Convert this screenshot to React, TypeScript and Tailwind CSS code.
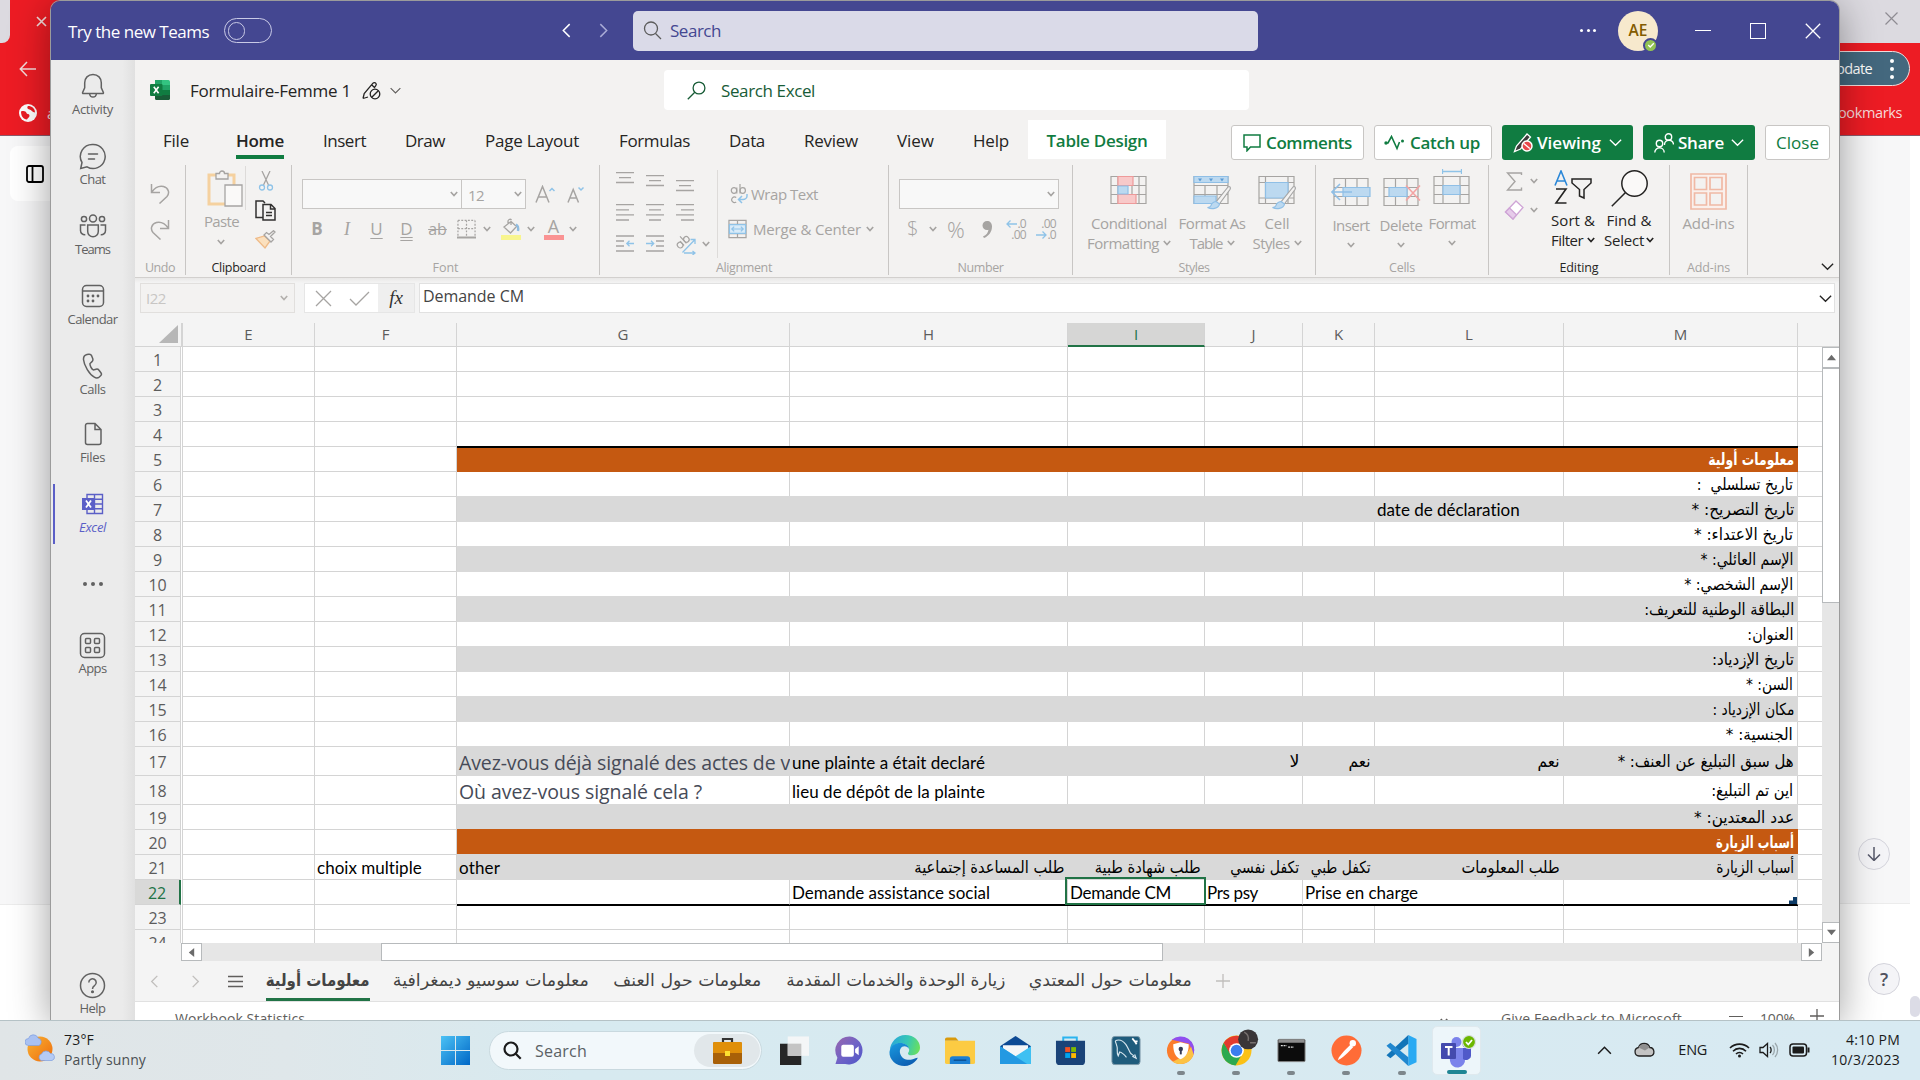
import React, { useLayoutEffect, useRef, useState, type ReactNode } from "react";

/* Text that fills the width given by its class: Latin by tracking, Arabic by horizontal scale. */
function Fit({ c = "", ar = false, children }: { c?: string; ar?: boolean; children: string }) {
  const outer = useRef<HTMLSpanElement>(null);
  const inner = useRef<HTMLSpanElement>(null);
  const [v, setV] = useState<number | null>(null);
  useLayoutEffect(() => {
    if (!outer.current || !inner.current || v !== null) return;
    const target = outer.current.clientWidth;
    const natural = inner.current.getBoundingClientRect().width;
    setV(ar ? target / natural : (target - natural) / children.length);
  }, [v, ar, children]);
  const style = v === null ? undefined : ar ? { transform: `scaleX(${v})` } : { letterSpacing: v };
  return (
    <span ref={outer} className={"shrink-0 whitespace-pre leading-none " + (ar ? "flex justify-end " : "block ") + c}>
      <span ref={inner} dir={ar ? "rtl" : "ltr"} className="inline-block origin-right shrink-0 leading-[1.4]" style={style}>
        {children}
      </span>
    </span>
  );
}

function Svg({ c, vb, children, sw = 1.3 }: { c: string; vb: string; children: ReactNode; sw?: number }) {
  return (
    <svg className={"block shrink-0 " + c} viewBox={vb} fill="none" stroke="currentColor" strokeWidth={sw}>
      {children}
    </svg>
  );
}

function Ch({ c = "" }: { c?: string }) {
  return (
    <Svg c={"w-[8px] h-[6px] " + c} vb="0 0 8 6" sw={1.6}>
      <path d="M.8 1 4 4.6 7.2 1" />
    </Svg>
  );
}

function Chevron({ c = "", d = "down" }: { c?: string; d?: "down" | "left" | "right" | "up" }) {
  const p = { down: "M2 5l6 6 6-6", up: "M2 11l6-6 6 6", left: "M11 2L5 8l6 6", right: "M5 2l6 6-6 6" }[d];
  return (
    <Svg c={c} vb="0 0 16 16" sw={1.4}>
      <path d={p} />
    </Svg>
  );
}

/* ---------- Teams rail ---------- */
function RailItem({ label, w, icon, c = "" }: { label: string; w: string; icon: ReactNode; c?: string }) {
  return (
    <div className={"flex flex-col items-center shrink-0 h-[48px] pr-[1px] " + c}>
      <div className="h-[30px] flex items-center">{icon}</div>
      <div className="h-[18px] flex items-center -mt-[1px]">
        <Fit c={"text-[13px] " + w}>{label}</Fit>
      </div>
    </div>
  );
}

function Rail() {
  return (
    <div className="w-[84px] shrink-0 pt-[11px] flex flex-col bg-[linear-gradient(90deg,#ebebeb_0,#ebebeb_85%,#e0e0e0_100%)] text-[#616161]">
      <RailItem label="Activity" w="w-[41px]" icon={
        <Svg c="w-[26px] h-[26px]" vb="0 0 26 26" sw={1.5}><path d="M13 1.5c-5 0-8.3 3.600-8.300 8.300v5L2.600 19.500c-.2.600.1 1 .7 1h19.400c.6 0 .9-.4.7-1l-2.100-4.700v-5C21.300 5.100 18 1.500 13 1.500zM9.500 20.500c.3 2.300 1.700 3.600 3.500 3.600s3.200-1.300 3.500-3.600" /></Svg>} />
      <RailItem c="mt-[22px]" label="Chat" w="w-[26px]" icon={
        <Svg c="w-[27px] h-[27px]" vb="0 0 27 27" sw={1.5}><path d="M14 1.500a12 12 0 1 1-6 22.300L1.700 25.500 3 19.500A12 12 0 0 1 14 1.500zM9.500 11h9M9.500 16h6" strokeLinecap="round" /></Svg>} />
      <RailItem c="mt-[22px]" label="Teams" w="w-[35px]" icon={
        <Svg c="w-[28px] h-[24px]" vb="0 0 28 24" sw={1.5}><circle cx="14" cy="4.500" r="3.500" /><circle cx="5" cy="5" r="2.600" /><circle cx="23" cy="5" r="2.600" /><path d="M8.700 11h10.600v6.500a5.300 5.300 0 0 1-10.600 0zM6.500 11H1.500v5.500c0 2.500 2 4.500 4.800 4.300M21.500 11h5v5.500c0 2.500-2 4.500-4.800 4.300" /></Svg>} />
      <RailItem c="mt-[22px]" label="Calendar" w="w-[50px]" icon={
        <Svg c="w-[24px] h-[24px]" vb="0 0 24 24" sw={1.5}><rect x="1.500" y="1.500" width="21" height="21" rx="4" /><path d="M1.500 7h21" /><g fill="currentColor" stroke="none"><circle cx="7" cy="12" r="1.400" /><circle cx="12" cy="12" r="1.400" /><circle cx="17" cy="12" r="1.400" /><circle cx="7" cy="17" r="1.400" /><circle cx="12" cy="17" r="1.400" /></g></Svg>} />
      <RailItem c="mt-[22px]" label="Calls" w="w-[26px]" icon={
        <Svg c="w-[22px] h-[26px]" vb="0 0 22 26" sw={1.5}><path d="M5 1.500l1.700-.3c1.300-.2 2.500.5 3 1.700l1 2.700c.4 1.100.1 2.300-.7 3L8 10.500c-.3 2 1.500 5.300 3.300 6.500l2.800-.8c1.100-.3 2.200.1 2.900 1l1.900 2.500c.7 1 .6 2.300-.3 3.100l-1.300 1.200c-1.400 1.200-3.400 1.200-5 .2C7.500 21.500 2 12.500 1.500 6.500 1.400 4 2.700 2 5 1.500z" /></Svg>} />
      <RailItem c="mt-[20px]" label="Files" w="w-[25px]" icon={
        <Svg c="w-[20px] h-[24px]" vb="0 0 20 24" sw={1.500}><path d="M4.500 1.500h7.500l6 6v13a2 2 0 0 1-2 2H4.500a2 2 0 0 1-2-2v-17a2 2 0 0 1 2-2zM12 1.500v6h6" /></Svg>} />
      <div className="relative mt-[22px]">
        <RailItem c="text-[#5b5fc7] italic" label="Excel" w="w-[27px]" icon={
          <Svg c="w-[22px] h-[22px]" vb="0 0 22 22" sw={1.400}><path d="M5 1.500h15.500v19H5zM12.500 1.500v19M5 6.300h15.500M5 11h15.500M5 15.700h15.500" /><rect x="0" y="5" width="13" height="12" fill="currentColor" stroke="none" /><path d="M4 7.500l5 7M9 7.500l-5 7" stroke="#fff" strokeWidth="1.800" /></Svg>} />
        <div className="absolute left-[2px] -top-[5px] w-[2px] h-[60px] bg-[#5b5fc7]" />
      </div>
      <div className="mt-[37px] h-[20px] flex items-center justify-center gap-[4px]">
        <i className="size-[4px] rounded-full bg-[#616161]" /><i className="size-[4px] rounded-full bg-[#616161]" /><i className="size-[4px] rounded-full bg-[#616161]" />
      </div>
      <RailItem c="mt-[36px]" label="Apps" w="w-[28px]" icon={
        <Svg c="w-[27px] h-[27px]" vb="0 0 27 27" sw={1.500}><rect x="1.500" y="1.500" width="24" height="24" rx="4" /><rect x="6.500" y="6.500" width="5" height="5" rx="1" /><rect x="15.500" y="6.500" width="5" height="5" rx="1" /><rect x="6.500" y="15.500" width="5" height="5" rx="1" /><rect x="15.500" y="15.500" width="5" height="5" rx="1" /></Svg>} />
      <RailItem c="mt-[292px]" label="Help" w="w-[26px]" icon={
        <Svg c="w-[27px] h-[27px]" vb="0 0 27 27" sw={1.500}><circle cx="13.500" cy="13.500" r="12" /><path d="M9.800 10.500a3.700 3.700 0 1 1 5.700 3.100c-1.300.9-2 1.700-2 3.400" /><circle cx="13.500" cy="19.800" r=".8" fill="currentColor" /></Svg>} />
    </div>
  );
}

/* ---------- Title bar ---------- */
function TitleBar() {
  return (
    <div className="h-[59px] shrink-0 bg-[#444791] flex items-center text-white">
      <Fit c="ml-[17px] mt-[2px] w-[141px] text-[17px]">Try the new Teams</Fit>
      <div className="ml-[15px] w-[48px] h-[25px] rounded-full border border-[#c9cae6] flex items-center pl-[3px]">
        <div className="w-[17px] h-[18px] rounded-full border border-[#c9cae6]" />
      </div>
      <Chevron d="left" c="ml-[286px] size-[17px]" />
      <Chevron d="right" c="ml-[20px] size-[17px] text-[#a9abd6]" />
      <div className="ml-[21px] w-[625px] h-[40px] rounded-[5px] bg-[#dadae8] flex items-center">
        <Svg c="ml-[10px] w-[19px] h-[19px] text-[#5c5c5c]" vb="0 0 19 19"><circle cx="8" cy="7.500" r="6.500" /><path d="M12.500 12.500l5.500 5.500" /></Svg>
        <Fit c="ml-[8px] w-[51px] text-[17px] text-[#444791]">Search</Fit>
      </div>
      <div className="ml-[322px] w-[16px] flex justify-between">
        <i className="size-[3px] rounded-full bg-white" /><i className="size-[3px] rounded-full bg-white" /><i className="size-[3px] rounded-full bg-white" />
      </div>
      <div className="relative ml-[22px] size-[40px] rounded-full bg-[#f7e9cd] flex items-center justify-center">
        <Fit c="w-[19px] text-[15.500px] font-semibold text-[#835b00]">AE</Fit>
        <div className="absolute left-[25px] top-[27px] size-[15px] rounded-full bg-[#92c353] border-2 border-[#444791] flex items-center justify-center">
          <Svg c="size-[8px]" vb="0 0 8 8"><path d="M1.200 4l2 2 3.600-3.800" /></Svg>
        </div>
      </div>
      <div className="ml-[37px] w-[16px] h-px bg-white" />
      <div className="ml-[39px] w-[16px] h-[16px] border border-white" />
      <Svg c="ml-[39px] w-[16px] h-[16px]" vb="0 0 16 16"><path d="M.8.8l14.400 14.400M15.200.8L.8 15.200" /></Svg>
    </div>
  );
}

/* ---------- Excel header ---------- */
function NameRow() {
  return (
    <div className="h-[60px] flex items-center text-[#252423]">
      <Svg c="ml-[15px] w-[20px] h-[20px]" vb="0 0 20 20">
        <g stroke="none"><path d="M5 0h7v10H5z" fill="#21a366" /><path d="M12 0h6.500A1.500 1.500 0 0 1 20 1.500V5h-8z" fill="#33c481" /><path d="M12 5h8v5h-8z" fill="#21a366" /><path d="M5 10h7v10H6.500A1.500 1.500 0 0 1 5 18.500z" fill="#185c37" /><path d="M12 10h8v5h-8z" fill="#107c41" /><path d="M10 15h10v3.500a1.500 1.500 0 0 1-1.500 1.500H10z" fill="#185c37" /><rect x="0" y="4" width="12.500" height="12" rx="1" fill="#107c41" /></g>
        <path d="M3.800 6.800l4.800 6.400M8.600 6.800l-4.800 6.400" stroke="#fff" strokeWidth="1.600" />
      </Svg>
      <Fit c="ml-[20px] mt-[2px] w-[161px] text-[17px]">Formulaire-Femme 1</Fit>
      <Svg c="ml-[11px] w-[19px] h-[19px]" vb="0 0 19 19"><path d="M1 17.500l1.200-5L11 2.200c.7-.8 1.900-.9 2.600-.2.800.7.900 1.700.2 2.600L12 7M1 17.500l5-1.500M9.800 4l2.500 2.200" /><circle cx="13" cy="13" r="4.800" /><path d="M9.800 16.300l6.500-6.500" /></Svg>
      <Chevron c="ml-[8px] size-[13px] text-[#605e5c]" />
      <div className="ml-[262px] w-[585px] h-[40px] rounded-[4px] bg-white flex items-center text-[#185c37]">
        <Svg c="ml-[23px] w-[19px] h-[19px]" vb="0 0 19 19"><circle cx="12" cy="7" r="5.900" /><path d="M7.800 11.200L.8 18.200" /></Svg>
        <Fit c="ml-[15px] mt-[2px] w-[94px] text-[17px]">Search Excel</Fit>
      </div>
    </div>
  );
}

const TABS: [string, string][] = [
  ["File", "ml-[28px] w-[26px]"],
  ["Insert", "ml-[39px] w-[43px]"],
  ["Draw", "ml-[39px] w-[40px]"],
  ["Page Layout", "ml-[40px] w-[94px]"],
  ["Formulas", "ml-[40px] w-[71px]"],
  ["Data", "ml-[39px] w-[36px]"],
  ["Review", "ml-[39px] w-[54px]"],
  ["View", "ml-[39px] w-[37px]"],
  ["Help", "ml-[39px] w-[36px]"],
];

function TabRow() {
  return (
    <div className="h-[40px] flex text-[17px] text-[#252423]">
      <div className="h-[39px] pt-[3px] flex items-center">
        <Fit c={TABS[0][1]}>{TABS[0][0]}</Fit>
        <div className="ml-[47px] w-[48px] h-[36px] flex flex-col justify-end border-b-4 border-[#107c41]">
          <Fit c="w-[48px] mb-[2px] font-semibold">Home</Fit>
        </div>
        {TABS.slice(1).map(([t, c]) => <Fit key={t} c={c}>{t}</Fit>)}
      </div>
      <div className="ml-[19px] w-[138px] h-[39px] pt-[3px] bg-white flex items-center justify-center">
        <Fit c="w-[101px] font-semibold text-[#107c41]">Table Design</Fit>
      </div>
      <div className="ml-[65px] mt-[5px] h-[35px] flex gap-[10px] text-[#107c41] font-semibold text-[17px]">
        <div className="w-[133px] bg-white border border-[#c8c6c4] rounded-[3px] flex items-center">
          <Svg c="ml-[11px] w-[18px] h-[18px]" vb="0 0 18 18" sw={1.500}><path d="M1 1h16v12H7.500L4 16.800V13H1z" /></Svg>
          <Fit c="ml-[5px] mt-[1px] w-[86px]">Comments</Fit>
        </div>
        <div className="w-[118px] bg-white border border-[#c8c6c4] rounded-[3px] flex items-center">
          <Svg c="ml-[9px] w-[21px] h-[16px]" vb="0 0 21 16" sw={1.600}><path d="M1 8h3L7.500 1.500l5.500 12L15.500 7" /><circle cx="18.500" cy="6" r="1.500" fill="currentColor" stroke="none" /><circle cx="2" cy="8" r="1.700" fill="currentColor" stroke="none" /></Svg>
          <Fit c="ml-[5px] mt-[1px] w-[70px]">Catch up</Fit>
        </div>
        <div className="w-[131px] bg-[#107c41] text-white rounded-[3px] flex items-center">
          <Svg c="ml-[11px] w-[21px] h-[21px]" vb="0 0 21 21" sw={1.300}><path d="M1.500 19.500l2-5.500L14 2l3.500 3L7.500 17z" fill="#3b3a39" /><circle cx="14" cy="14" r="5" fill="#e8484b" stroke="#fff" strokeWidth="1.500" /><path d="M10.800 11.500l6 5" /></Svg>
          <Fit c="ml-[3px] mt-[1px] w-[64px]">Viewing</Fit>
          <Chevron c="ml-[7px] size-[15px]" />
        </div>
        <div className="w-[112px] bg-[#107c41] text-white rounded-[3px] flex items-center">
          <Svg c="ml-[11px] w-[20px] h-[20px]" vb="0 0 20 20" sw={1.400}><circle cx="14.500" cy="4" r="3.200" /><circle cx="5.500" cy="10.500" r="3.200" /><path d="M10.500 12a4.500 4.500 0 0 1 9-.500M.8 19.500a4.700 4.700 0 0 1 9.400 0" /></Svg>
          <Fit c="ml-[4px] mt-[1px] w-[46px]">Share</Fit>
          <Chevron c="ml-[6px] size-[15px]" />
        </div>
        <div className="w-[65px] bg-white border border-[#c8c6c4] rounded-[3px] flex items-center justify-center font-normal">
          <Fit c="w-[43px] mt-[1px]">Close</Fit>
        </div>
      </div>
    </div>
  );
}

/* ---------- Ribbon ---------- */
function Group({ w, label, lw, on = false, children }: { w: string; label: string; lw: string; on?: boolean; children: ReactNode }) {
  return (
    <div className={"h-[110px] shrink-0 border-r border-[#c8c6c4] flex flex-col " + w}>
      <div className="h-[97px] flex items-start">{children}</div>
      <div className={"h-[15px] flex items-center justify-center text-[12.500px] " + (on ? "text-[#252423]" : "")}>
        <Fit c={lw}>{label}</Fit>
      </div>
    </div>
  );
}

function Lines({ d, c = "" }: { d: "l" | "c" | "r" | "v"; c?: string }) {
  const p = {
    v: "M0 .7h18M3 5.600h12M0 10.500h18",
    l: "M0 .7h18M0 5.800h13M0 10.900h18M0 16h13",
    c: "M0 .7h18M3 5.800h12M0 10.900h18M3 16h12",
    r: "M0 .7h18M5 5.800h13M0 10.900h18M5 16h13",
  }[d];
  return <Svg c={"w-[18px] h-[18px] " + c} vb="0 0 18 18"><path d={p} /></Svg>;
}

function IndentIcon({ out }: { out?: boolean }) {
  return (
    <Svg c="w-[18px] h-[18px]" vb="0 0 18 18">
      <path d={out ? "M0 1h18M0 6h8M0 11h8M0 16h18" : "M0 1h18M10 6h8M10 11h8M0 16h18"} />
      <path stroke="#8fc3e8" d={out ? "M18 8.500h-7M13.500 5.800L10.800 8.500l2.700 2.700" : "M0 8.500h7.500M5 5.800l2.700 2.700L5 11.200"} />
    </Svg>
  );
}

function TableIcon({ kind }: { kind: "cond" | "table" | "cell" | "insert" | "delete" | "format" }) {
  const brush = <><path d="M36 13L24 28l3 2.500L38 15.500c1.200-2-.7-4-2-2.500z" fill="#f3f2f1" stroke="#a6a6a6" /><path d="M24 27.500c-3 .5-4.500 2-5 4-.5 1.300-1.700 2-3.500 2 4 2 11 1.500 12-3.500z" fill="#bcd9f0" stroke="#8fbfe6" /></>;
  return (
    <Svg c="w-[40px] h-[36px]" vb="0 0 40 36" sw={1.200}>
      {kind === "cond" && <><path d="M2 2.500h35v27H2zM2 11.500h35M2 20.500h35M9 2.500v27M30 2.500v27M23 2.500v27" /><path d="M9 2.500h15v9H9zM9 20.500h18v9H9z" fill="#f8c9c9" stroke="#ee9a9a" /><path d="M9 12h10v8H9z" fill="#bcd9f0" stroke="#8fbfe6" /></>}
      {kind === "table" && <><path d="M2 2.500h34v27H2zM2 11.500h34M2 20.500h34M13 11.500v18M25 11.500v18" /><path d="M2 2.500h34v6H2zM2 22h22v7.500H2z" fill="#bcd9f0" stroke="#8fbfe6" /><path d="M6 4.500h4l-2 3zM17 4.500h4l-2 3zM28 4.500h4l-2 3z" fill="#5a9bd5" stroke="none" />{brush}</>}
      {kind === "cell" && <><path d="M2 2.500h35v27H2zM2 8.500h35M2 24h35M8.500 2.500v27M31 2.500v27" /><path d="M8.500 8.500H31V24H8.500z" fill="#bcd9f0" stroke="#8fbfe6" />{brush}</>}
      {kind === "insert" && <><path d="M3 2.500h34v27H3zM3 11.500h34M3 20.500h34M14.500 2.500v27M26 2.500v27" /><path d="M12 11.500h27v9H12z" fill="#bcd9f0" stroke="#8fbfe6" /><path d="M21 16H1M9 8l-8 8 8 8" stroke="#8fbfe6" strokeWidth="1.600" /></>}
      {kind === "delete" && <><path d="M3 2.500h34v27H3zM3 11.500h34M3 20.500h34M14.500 2.500v27M26 2.500v27" /><path d="M8 11.500h18v9H8z" fill="#bcd9f0" stroke="#8fbfe6" /><path d="M25 9.500l14 15M39 9.500l-14 15" stroke="#f3a3a3" strokeWidth="1.600" /></>}
      {kind === "format" && <><path d="M2 2.500h35v27H2zM2 11.500h35M2 20.500h35M11 2.500v27M28 2.500v27" /><path d="M11 11.500h17v9H11z" fill="#bcd9f0" stroke="#8fbfe6" /></>}
    </Svg>
  );
}

function Big({ w, icon, l1, l2, c = "" }: { w: string; icon: ReactNode; l1: [string, string]; l2?: [string, string]; c?: string }) {
  return (
    <div className={"pt-[9px] flex flex-col items-center shrink-0 text-[15px] " + w + " " + c}>
      <div className="h-[39px]">{icon}</div>
      <div className="h-[20px] flex items-center"><Fit c={l1[1]}>{l1[0]}</Fit></div>
      <div className="h-[20px] flex items-center gap-[4px]">{l2 && l2[0] && <Fit c={l2[1]}>{l2[0]}</Fit>}{l2 && <Ch />}</div>
    </div>
  );
}

function Ribbon() {
  return (
    <div className="h-[118px] pt-[5px] flex text-[#a6a4a2] border-b border-[#d2d0ce]">
      <Group w="w-[51px]" label="Undo" lw="w-[30px]">
        <div className="pl-[15px] pt-[18px] flex flex-col gap-[15px]">
          <Svg c="w-[20px] h-[21px]" vb="0 0 20 21" sw={1.5}><path d="M1.500 1v8.500H10M1.800 9C5 4.500 9 2.500 13.500 3.500c5 1.300 6.500 6.500 3.500 10L9.500 20.500" /></Svg>
          <Svg c="w-[20px] h-[21px]" vb="0 0 20 21" sw={1.5}><path d="M18.500 1v8.500H10M18.200 9C15 4.500 11 2.500 6.500 3.500 1.500 4.800 0 10 3 13.500L10.500 20.500" /></Svg>
        </div>
      </Group>
      <Group w="w-[106px]" label="Clipboard" lw="w-[54px]" on>
        <div className="ml-[17px] w-[42px] pt-[4px] flex flex-col items-start">
          <Svg c="ml-[4px] w-[36px] h-[38px]" vb="0 0 36 38"><path d="M2 6h25v29H2z" fill="none" stroke="#f5d19f" strokeWidth="3" /><path d="M9 4.500h3.500a2.500 2.500 0 0 1 5 0H21V10H9z" fill="#f3f2f1" /><path d="M18 16h17v21H18z" fill="#faf9f8" /></Svg>
          <div className="ml-[1px] h-[20px] mt-[4px] flex items-center"><Fit c="w-[35px] text-[15px]">Paste</Fit></div>
          <Ch c="ml-[14px] mt-[8px]" />
        </div>
        <div className="w-px h-[44px] mt-[1px] bg-[#dddbd9]" />
        <div className="ml-[9px] pt-[6px] flex flex-col items-center gap-[9px]">
          <Svg c="w-[16px] h-[20px]" vb="0 0 16 20"><path d="M4 0l6.500 14M12 0L5.500 14" /><circle cx="4" cy="16.500" r="2.500" stroke="#8fc3e8" /><circle cx="12" cy="16.500" r="2.500" stroke="#8fc3e8" /></Svg>
          <Svg c="w-[21px] h-[21px] text-[#323130]" vb="0 0 21 21" sw={1.500}><path d="M8 17.500H1V1h7l2 2M8 4.500h8l4 4V20H8zM15.500 4.500v4.500H20M11 12.500h6M11 15.500h6" /></Svg>
          <Svg c="w-[21px] h-[20px]" vb="0 0 21 20"><path d="M1 8.500l9 9.500 5-7-5.500-5z" fill="#fbe0bd" stroke="#efbb88" /><path d="M9 5l7 7 2.500-2.500-3-3L20 2 18.500.7 14 4.500l-2.500-2z" fill="#f3f2f1" /></Svg>
        </div>
      </Group>
      <Group w="w-[308px]" label="Font" lw="w-[26px]">
        <div className="ml-[10px] pt-[14px] flex flex-col">
          <div className="flex items-center">
            <div className="w-[160px] h-[30px] border border-[#c8c6c4] bg-[#f8f8f8] flex items-center justify-end pr-[3px]"><Ch /></div>
            <div className="w-[64px] h-[30px] border border-l-0 border-[#c8c6c4] bg-[#f8f8f8] flex items-center justify-between pl-[6px] pr-[3px]"><Fit c="w-[16px] mt-[2px] text-[15px]">12</Fit><Ch /></div>
            <Svg c="ml-[9px] w-[20px] h-[18px]" vb="0 0 20 18" sw={1.500}><path d="M1 17.500L7.500 1.500 14 17.500M3.200 12h8.600" /><path d="M14.500 6L17 3.500 19.500 6" stroke="#8fc3e8" /></Svg>
            <Svg c="ml-[12px] w-[18px] h-[18px]" vb="0 0 18 18" sw={1.500}><path d="M1 17.500L6.200 4.500l5.300 13M2.900 13h6.700" /><path d="M11.500 2.500L14 5 16.500 2.500" stroke="#8fc3e8" /></Svg>
          </div>
          <div className="h-[30px] mt-[5px] flex items-center text-[17px]">
            <span className="w-[30px] text-center font-bold">B</span>
            <span className="w-[30px] text-center italic font-['Liberation_Serif'] text-[18px]">I</span>
            <span className="w-[29px] text-center underline underline-offset-[3px]">U</span>
            <span className="w-[31px] text-center underline decoration-double underline-offset-[2px]">D</span>
            <span className="w-[31px] text-center line-through text-[16px]">ab</span>
            <Svg c="ml-[4px] w-[19px] h-[20px]" vb="0 0 20 20"><path d="M1 1h18M1 1v17M19 1v17M10 1v17M1 9.500h18" strokeDasharray="2 1.500" /><path d="M0 19h20" strokeWidth="2" /></Svg>
            <Ch c="ml-[7px]" />
            <Svg c="ml-[10px] w-[20px] h-[22px]" vb="0 0 20 22"><path d="M10 3.500l5.500 5L9.500 15 3 9zM10 3.500V7M7 6V3.500a2 2 0 0 1 3.500-1.500" /><path d="M15 6.500c2 1 2.500 3.500 2 6.500" stroke="#8fbce0" strokeWidth="2.400" /><path d="M0 17h20v5H0z" fill="#f8f58e" stroke="none" /></Svg>
            <Ch c="ml-[6px]" />
            <div className="ml-[8px] w-[21px] flex flex-col items-center"><span className="leading-[17px] text-[18px]">A</span><i className="block w-[20px] h-[5px] bg-[#fa9393]" /></div>
            <Ch c="ml-[5px]" />
          </div>
        </div>
      </Group>
      <Group w="w-[289px]" label="Alignment" lw="w-[56px]">
        <div className="ml-[16px] pt-[7px] w-[101px] flex flex-col">
          <div className="flex gap-[12px] h-[32px]"><Lines d="v" /><Lines d="v" c="mt-[3px]" /><Lines d="v" c="mt-[8px]" /></div>
          <div className="flex gap-[12px] h-[31px]"><Lines d="l" /><Lines d="c" /><Lines d="r" /></div>
          <div className="flex gap-[12px] items-center h-[18px]"><IndentIcon out /><IndentIcon />
            <div className="flex items-center gap-[5px]">
              <Svg c="w-[21px] h-[21px]" vb="0 0 21 21">
                <g transform="rotate(-42 6 8)" strokeWidth="1.200"><ellipse cx="2.500" cy="9" rx="2.600" ry="2.900" /><path d="M5.200 6v6M8.300 2.500V12" /><ellipse cx="11" cy="9" rx="2.600" ry="2.900" /></g>
                <path d="M6.500 18.500L19 5.500M14.500 5.500H19v4.500M8 19h10.500M16.500 17l2.500 2-2.500 2" stroke="#8fc3e8" />
              </Svg>
              <Ch />
            </div>
          </div>
        </div>
        <div className="w-px h-[88px] mt-[5px] bg-[#dddbd9]" />
        <div className="pl-[10px] pt-[19px] flex flex-col">
          <div className="h-[20px] flex items-center">
            <Svg c="ml-[2px] w-[18px] h-[20px]" vb="0 0 18 20" sw={1.200}>
              <ellipse cx="4" cy="6.500" rx="2.700" ry="2.800" /><path d="M6.800 3.500v6M10 0v9.500" /><ellipse cx="12.700" cy="6.500" rx="2.700" ry="2.800" />
              <path d="M6.200 13.500a2.800 2.800 0 1 0 0 4.500" />
              <path d="M17 10v2c0 2-2 3.500-4 3.500H9M12 12l-3.500 3.500L12 19" stroke="#8fc3e8" strokeWidth="1.500" />
            </Svg>
            <Fit c="ml-[3px] w-[67px] text-[15px]">Wrap Text</Fit>
          </div>
          <div className="mt-[15px] h-[20px] flex items-center">
            <Svg c="w-[19px] h-[20px]" vb="0 0 20 20"><path d="M1 1h18v18H1zM1 5h18M1 15h18M10 1v4M10 15v4" /><path d="M1.500 5.500h17v9h-17z" fill="#d9ebf8" stroke="#8fc3e8" /><path d="M4 10h12M6.500 7.500L4 10l2.500 2.500M13.500 7.500L16 10l-2.500 2.500" stroke="#8fc3e8" /></Svg>
            <Fit c="ml-[6px] w-[108px] text-[15px]">Merge &amp; Center</Fit>
            <Ch c="ml-[5px]" />
          </div>
        </div>
      </Group>
      <Group w="w-[184px]" label="Number" lw="w-[46px]">
        <div className="ml-[10px] pt-[14px]">
          <div className="w-[160px] h-[30px] border border-[#c8c6c4] bg-[#f8f8f8] flex items-center justify-end pr-[3px]"><Ch /></div>
          <div className="mt-[5px] h-[30px] flex items-center text-[20px] leading-none">
            <span className="ml-[8px] w-[12px] font-light">$</span>
            <Ch c="ml-[10px]" />
            <span className="ml-[10px] w-[20px] font-light text-[22px]">%</span>
            <Svg c="ml-[15px] w-[10px] h-[17px]" vb="0 0 10 17"><path d="M5 0a4.500 4.500 0 1 0 0 9c.8 0 1.300-.2 1.500-.3C6 11.500 4.500 14 1 15.500L2 17c5-2 8-6.500 8-11.500C10 2 8 0 5 0z" fill="currentColor" stroke="none" /></Svg>
            <div className="ml-[14px] w-[20px] text-[12px] leading-[10px] flex flex-col items-end gap-[1px]"><div className="flex items-center"><Svg c="w-[11px] h-[8px]" vb="0 0 11 8"><path d="M11 4H1M4.500.500L1 4l3.500 3.500" stroke="#8fc3e8" /></Svg><span className="tracking-[-0.700px]">.0</span></div><div className="tracking-[-0.700px]">.00</div></div>
            <div className="ml-[10px] w-[20px] text-[12px] leading-[10px] flex flex-col items-end gap-[1px]"><div className="tracking-[-0.700px]">.00</div><div className="flex items-center"><Svg c="w-[11px] h-[8px]" vb="0 0 11 8"><path d="M0 4h10M6.500.500L10 4 6.500 7.500" stroke="#8fc3e8" /></Svg><span className="tracking-[-0.700px]">.0</span></div></div>
          </div>
        </div>
      </Group>
      <Group w="w-[243px]" label="Styles" lw="w-[31px]">
        <Big c="ml-[12px]" w="w-[88px]" icon={<TableIcon kind="cond" />} l1={["Conditional", "w-[76px]"]} l2={["Formatting", "w-[72px]"]} />
        <Big c="ml-[2px]" w="w-[74px]" icon={<TableIcon kind="table" />} l1={["Format As", "w-[67px]"]} l2={["Table", "w-[33px]"]} />
        <Big w="w-[56px]" icon={<TableIcon kind="cell" />} l1={["Cell", "w-[25px]"]} l2={["Styles", "w-[37px]"]} />
      </Group>
      <Group w="w-[173px]" label="Cells" lw="w-[26px]">
        <Big c="ml-[11px] mt-[2px]" w="w-[48px]" icon={<TableIcon kind="insert" />} l1={["Insert", "w-[37px]"]} l2={["", ""]} />
        <Big c="ml-[2px] mt-[2px]" w="w-[48px]" icon={<TableIcon kind="delete" />} l1={["Delete", "w-[43px]"]} l2={["", ""]} />
        <Big w="w-[54px]" icon={<div className="flex flex-col items-center"><Svg c="-mt-[5px] w-[20px] h-[5px] text-[#8fc3e8]" vb="0 0 20 5"><path d="M.5 0v5M19.500 0v5M0 2.500h20" /></Svg><TableIcon kind="format" /></div>} l1={["Format", "w-[47px]"]} l2={["", ""]} />
      </Group>
      <Group w="w-[181px]" label="Editing" lw="w-[39px]" on>
        <div className="ml-[15px] w-[40px] pt-[6px]">
          <div className="h-[20px] flex items-center"><Svg c="ml-[2px] w-[17px] h-[19px]" vb="0 0 17 19" sw={1.400}><path d="M15.500 3V1H1.500l7.500 8.500-7.500 8.500h14v-2.500" /></Svg><Ch c="ml-[7px]" /></div>
          <div className="mt-[9px] h-[20px] flex items-center"><Svg c="w-[20px] h-[20px]" vb="0 0 20 20"><path d="M12 1l7 6.500L9 19 1.500 12z" stroke="#cfa5d6" fill="#fff" /><path d="M5.500 8l7 6.800L9 19 1.500 12z" stroke="#cfa5d6" fill="#e6cbea" /></Svg><Ch c="ml-[6px]" /></div>
        </div>
        <div className="ml-[4px] w-[50px] pt-[5px] flex flex-col items-center text-[#252423] text-[15px]">
          <div className="h-[40px] flex items-start gap-[3px]">
            <Svg c="w-[14px] h-[34px]" vb="0 0 14 34" sw={1.600}><path d="M1 15.500L7 1l6 14.500M3 11h8" stroke="#2b88d8" /><path d="M2 19h10L2 33h10.500" /></Svg>
            <Svg c="mt-[8px] w-[21px] h-[22px]" vb="0 0 21 22" sw={1.500}><path d="M1 1h19v4l-7 6.500V20l-4.500-2V11.500L1 5z" /></Svg>
          </div>
          <div className="h-[20px] flex items-center"><Fit c="w-[44px]">Sort &amp;</Fit></div>
          <div className="h-[20px] flex items-center gap-[4px]"><Fit c="w-[32px]">Filter</Fit><Ch /></div>
        </div>
        <div className="ml-[4px] w-[54px] pt-[5px] flex flex-col items-center text-[#252423] text-[15px]">
          <div className="h-[40px]"><Svg c="w-[37px] h-[37px]" vb="0 0 37 37" sw={1.500}><circle cx="23.500" cy="13.500" r="12.700" fill="#faf9f8" /><path d="M14.500 22.500L.8 36.300" /></Svg></div>
          <div className="h-[20px] flex items-center"><Fit c="w-[45px]">Find &amp;</Fit></div>
          <div className="h-[20px] flex items-center gap-[2px]"><Fit c="w-[40px]">Select</Fit><Ch /></div>
        </div>
      </Group>
      <Group w="w-[78px]" label="Add-ins" lw="w-[43px]">
        <Big w="w-[77px]" icon={<Svg c="-mt-px w-[37px] h-[37px] text-[#f0b9a5]" vb="0 0 37 37" sw={1.700}><path d="M1 1h35v35H1z" fill="#faf0ec" /><path d="M4.500 4.500h12v12h-12zM20 4.500h12v12H20zM4.500 20h12v12h-12zM20 20h12v12H20z" fill="#f3f2f1" /></Svg>} l1={["Add-ins", "w-[52px]"]} />
      </Group>
      <Chevron c="ml-[72px] mt-[94px] size-[15px] text-[#252423]" />
    </div>
  );
}

function FormulaBar() {
  return (
    <div className="h-[45px] pt-[5px] flex bg-[linear-gradient(180deg,#e9e8e7_0,#f4f4f4_5px)]">
      <div className="ml-[5px] w-[155px] h-[30px] border border-[#e1dfdd] bg-[#f3f2f1] flex items-center justify-between pl-[5px] pr-[6px] text-[#c8c6c4]">
        <Fit c="w-[20px] text-[15px]">I22</Fit><Ch c="text-[#b3b0ad]" />
      </div>
      <div className="ml-[9px] w-[111px] h-[30px] border border-[#e6e6e6] bg-white flex items-center text-[#a6a4a2]">
        <Svg c="ml-[10px] w-[17px] h-[17px]" vb="0 0 17 17"><path d="M1 1l15 15M16 1L1 16" /></Svg>
        <Svg c="ml-[17px] w-[21px] h-[15px]" vb="0 0 21 15"><path d="M1 8l6 6L20 1" /></Svg>
        <div className="ml-[8px] flex-1 h-full bg-[#efefef] flex items-center justify-center text-[#323130] font-['Liberation_Serif'] italic text-[19px]">fx</div>
      </div>
      <div className="ml-[4px] w-[1416px] h-[30px] border border-[#e1e1e1] bg-white flex items-center justify-between pl-[3px] pr-[1px] text-[#444]">
        <Fit c="w-[101px] text-[16px] -mt-[3px]">Demande CM</Fit>
        <Chevron c="size-[15px] text-[#252423]" />
      </div>
    </div>
  );
}

/* ---------- Sheet ---------- */
const COLS: [string, string][] = [
  ["E", "w-[132px]"], ["F", "w-[142px]"], ["G", "w-[333px]"], ["H", "w-[278px]"], ["I", "w-[137px]"],
  ["J", "w-[98px]"], ["K", "w-[72px]"], ["L", "w-[189px]"], ["M", "w-[234px]"], ["", "w-[25px]"],
];
type Cell = [text: string, width: string];
type Row = { n: number; fill?: "gray" | "orange"; h?: string; cells?: Record<string, Cell> };
const ROWS: Row[] = [
  { n: 1 }, { n: 2 }, { n: 3 }, { n: 4 },
  { n: 5, fill: "orange", cells: { M: ["معلومات أولية", "w-[86px]"] } },
  { n: 6, cells: { M: ["تاريخ تسلسلي  :", "w-[96px]"] } },
  { n: 7, fill: "gray", cells: { L: ["date de déclaration", "w-[143px]"], M: ["تاريخ التصريح: *", "w-[103px]"] } },
  { n: 8, cells: { M: ["تاريخ الاعتداء: *", "w-[99px]"] } },
  { n: 9, fill: "gray", cells: { M: ["الإسم العائلي: *", "w-[93px]"] } },
  { n: 10, cells: { M: ["الإسم الشخصي: *", "w-[109px]"] } },
  { n: 11, fill: "gray", cells: { M: ["البطاقة الوطنية للتعريف:", "w-[150px]"] } },
  { n: 12, cells: { M: ["العنوان:", "w-[46px]"] } },
  { n: 13, fill: "gray", cells: { M: ["تاريخ الإزدياد:", "w-[82px]"] } },
  { n: 14, cells: { M: ["السن: *", "w-[47px]"] } },
  { n: 15, fill: "gray", cells: { M: ["مكان الإزدياد :", "w-[82px]"] } },
  { n: 16, cells: { M: ["الجنسية: *", "w-[67px]"] } },
  { n: 17, fill: "gray", h: "h-[29px]", cells: { G: ["Avez-vous déjà signalé des actes de v", "w-[331px]"], H: ["une plainte a était declaré", "w-[193px]"], J: ["لا", "w-[10px]"], K: ["نعم", "w-[22px]"], L: ["نعم", "w-[22px]"], M: ["هل سبق التبليغ عن العنف: *", "w-[176px]"] } },
  { n: 18, h: "h-[29px]", cells: { G: ["Où avez-vous signalé cela ?", "w-[243px]"], H: ["lieu de dépôt de la plainte", "w-[193px]"], M: ["اين تم التبليغ:", "w-[82px]"] } },
  { n: 19, fill: "gray", cells: { M: ["عدد المعتدين: *", "w-[100px]"] } },
  { n: 20, fill: "orange", cells: { M: ["أسباب الزيارة", "w-[78px]"] } },
  { n: 21, fill: "gray", cells: { F: ["choix multiple", "w-[105px]"], G: ["other", "w-[41px]"], H: ["طلب المساعدة إجتماعية", "w-[150px]"], I: ["طلب شهادة طبية", "w-[106px]"], J: ["تكفل نفسي", "w-[69px]"], K: ["تكفل طبي", "w-[60px]"], L: ["طلب المعلومات", "w-[98px]"], M: ["أسباب الزيارة", "w-[78px]"] } },
  { n: 22, cells: { H: ["Demande assistance social", "w-[198px]"], I: ["Demande CM", "w-[101px]"], J: ["Prs psy", "w-[51px]"], K: ["Prise en charge", "w-[113px]"] } },
  { n: 23 }, { n: 24 },
];
const isArabic = (s: string) => /[\u0600-\u06ff]/.test(s);

function SheetRow({ row }: { row: Row }) {
  const sel = row.n === 22;
  return (
    <div className={"flex shrink-0 " + (row.h ?? "h-[25px]")}>
      <div className={"w-[46px] shrink-0 border-b border-[#d4d4d4] flex items-center justify-center pt-[3px] text-[16px] " + (sel ? "bg-[#d9d9d8] text-[#217346] border-r-2 border-r-[#217346]" : "bg-[#f4f4f4] text-[#5c5c5c] border-r border-r-[#d4d4d4]")}>
        <Fit c={row.n > 9 ? "w-[18px]" : "w-[9px]"}>{String(row.n)}</Fit>
      </div>
      <div className="w-[2px] shrink-0 bg-white border-r border-[#d4d4d4]" />
      {COLS.map(([k, w], i) => {
        const inTable = i >= 2 && i <= 8;
        const fill = inTable ? row.fill : undefined;
        const cell = row.cells?.[k];
        const ar = cell ? isArabic(cell[0]) : false;
        let look = "border-r border-b border-[#d4d4d4] pt-[1px] ";
        if (fill === "gray") look = "bg-[#d9d9d9] shadow-[0_-1px_0_#d9d9d9] relative ";
        if (fill === "orange") look = "bg-[#c55911] shadow-[0_-1px_0_#c55911] relative text-white font-bold ";
        if (row.n === 5 && inTable) look = "bg-[#c55911] border-t border-black shadow-[0_-1px_0_#000] relative text-white font-bold ";
        if (sel && inTable) look = "relative pt-[2px] border-b border-b-black shadow-[0_1px_0_#000] " + (k === "K" ? "" : "border-r border-r-[#d4d4d4] ");
        const big = k === "G" && (row.n === 17 || row.n === 18);
        const font = big
          ? "font-['Open_Sans'] text-[19.500px] text-[#464a57] pt-[3px]"
          : ar
            ? "font-['DejaVu_Sans'] text-[16.500px] leading-none"
            : "font-['Lato'] text-[17px] " + (row.h ? "pt-[2px]" : "");
        return (
          <div key={i} className={"shrink-0 flex items-center " + look + w + (ar ? " justify-end pr-[4px]" : " pl-[2px]") + (fill ? "" : " text-black")}>
            {cell && <Fit ar={ar} c={cell[1] + " " + font}>{cell[0]}</Fit>}
            {sel && k === "I" && <div className="absolute -left-[3px] -top-[3px] z-10 w-[141px] h-[28px] border-2 border-[#217346]" />}
            {sel && k === "M" && <div className="absolute right-0 bottom-0 w-[8px] h-[7px] bg-[#0b3a66] [clip-path:polygon(50%_0,100%_0,100%_100%,0_100%,0_50%,50%_50%)]" />}
          </div>
        );
      })}
    </div>
  );
}

function Tri({ d }: { d: "up" | "down" | "left" | "right" }) {
  const p = { up: "M0 8l5-6 5 6z", down: "M0 2l5 6 5-6z", left: "M8 0L2 5l6 5z", right: "M2 0l6 5-6 5z" }[d];
  return <svg className="size-[9px]" viewBox="0 0 10 10"><path d={p} fill="#6b6b6b" /></svg>;
}

function Sheet() {
  return (
    <div className="flex flex-col">
      <div className="h-[19px] flex text-[16px] text-[#5c5c5c] bg-[#f4f4f4] border-b border-[#d4d4d4] box-content pb-[4px]">
        <div className="w-[46px] shrink-0 flex items-end justify-end pr-[3px]"><svg className="w-[19px] h-[18px] translate-y-[1px]" viewBox="0 0 19 18"><path d="M19 0v18H0z" fill="#b7b7b7" /></svg></div>
        <div className="w-[2px] h-[24px] border-x border-[#d4d4d4]" />
        {COLS.map(([k, w], i) => (
          <div key={i} className={"h-[24px] shrink-0 flex items-center justify-center " + w + (i < 9 ? " border-r border-[#d4d4d4]" : "") + (k === "I" ? " bg-[#d6d6d5] text-[#217346] border-b-2 border-b-[#217346]" : "")}>
            <span className={"text-[15px] leading-none " + (k === "I" ? "pt-[1px]" : "pb-[1px]")}>{k}</span>
          </div>
        ))}
      </div>
      <div className="flex h-[596px]">
        <div className="w-[1687px] flex flex-col overflow-hidden bg-white">
          {ROWS.map((r) => <SheetRow key={r.n} row={r} />)}
        </div>
        <div className="w-[17px] flex flex-col bg-[#e6e6e6]">
          <div className="h-[21px] bg-white border border-[#b7babc] border-r-0 flex items-center justify-center"><Tri d="up" /></div>
          <div className="h-[235px] bg-white border border-[#b7babc] border-r-0" />
          <div className="mt-auto h-[21px] bg-white border border-[#b7babc] border-r-0 flex items-center justify-center"><Tri d="down" /></div>
        </div>
      </div>
      <div className="h-[18px] flex bg-[#f4f4f4]">
        <div className="ml-[46px] w-[1641px] flex bg-[#e6e6e6]">
          <div className="w-[21px] bg-white border border-[#b7babc] flex items-center justify-center"><Tri d="left" /></div>
          <div className="ml-[179px] w-[782px] bg-white border border-[#b7babc]" />
          <div className="ml-auto w-[21px] bg-white border border-[#b7babc] flex items-center justify-center"><Tri d="right" /></div>
        </div>
      </div>
    </div>
  );
}

function SheetTabs() {
  return (
    <div className="h-[41px] flex items-center bg-[#f4f4f4] border-b border-[#e1e1e1] text-[#444] font-['DejaVu_Sans'] text-[17px]">
      <Chevron d="left" c="ml-[12px] size-[15px] text-[#c0bebc]" />
      <Chevron d="right" c="ml-[26px] size-[15px] text-[#c0bebc]" />
      <Svg c="ml-[25px] w-[15px] h-[13px] text-[#605e5c]" vb="0 0 15 13" sw={1.500}><path d="M0 1.500h15M0 6.500h15M0 11.500h15" /></Svg>
      <div className="ml-[23px] h-full w-[104px] border-b-[3px] border-[#217346] flex items-center pt-[2px]"><Fit ar c="w-[104px] font-bold">معلومات أولية</Fit></div>
      <Fit ar c="ml-[23px] w-[196px]">معلومات سوسيو ديمغرافية</Fit>
      <Fit ar c="ml-[24px] w-[148px]">معلومات حول العنف</Fit>
      <Fit ar c="ml-[25px] w-[219px]">زيارة الوحدة والخدمات المقدمة</Fit>
      <Fit ar c="ml-[24px] w-[163px]">معلومات حول المعتدي</Fit>
      <Svg c="ml-[24px] w-[14px] h-[14px] text-[#c0bebc]" vb="0 0 14 14"><path d="M7 0v14M0 7h14" /></Svg>
    </div>
  );
}

function StatusBar() {
  return (
    <div className="h-[18px] bg-white overflow-hidden text-[#605e5c] text-[14px]">
      <div className="h-[22px] mt-[6px] flex items-center">
        <Fit c="ml-[40px] w-[130px]">Workbook Statistics</Fit>
        <Ch c="ml-[1135px] mt-[4px]" />
        <Fit c="ml-[53px] w-[181px]">Give Feedback to Microsoft</Fit>
        <div className="ml-[47px] mb-[6px] w-[14px] h-px bg-[#605e5c]" />
        <Fit c="ml-[17px] w-[35px]">100%</Fit>
        <Svg c="ml-[15px] w-[14px] h-[14px] mb-[6px]" vb="0 0 14 14"><path d="M7 0v14M0 7h14" /></Svg>
      </div>
    </div>
  );
}

/* ---------- Taskbar ---------- */
function AppIcon({ children, dot }: { children: ReactNode; dot?: boolean }) {
  return (
    <div className="w-[55.200px] h-[60px] shrink-0 flex flex-col items-center pt-[14px]">
      <svg className="w-[31px] h-[31px] overflow-visible block" viewBox="0 0 32 32">{children}</svg>
      {dot && <i className="mt-[5px] w-[8px] h-[4px] rounded-full bg-[#7d868b]" />}
    </div>
  );
}

function Taskbar() {
  return (
    <div className="absolute left-0 top-[1020px] w-[1920px] h-[60px] border-t border-[#b5c2c6] bg-[linear-gradient(90deg,#e0e5e7_0,#dfe7ea_15%,#d7eaf0_30%,#d8eaf2_100%)] flex items-center text-[#1b1b1b]">
      <svg className="ml-[25px] w-[31px] h-[29px] shrink-0 -mt-[4px]" viewBox="0 0 31 29">
        <defs><linearGradient id="sun" x1="0" y1="0" x2="1" y2="1"><stop offset="0" stopColor="#f9b233" /><stop offset="1" stopColor="#ee6c0c" /></linearGradient></defs>
        <circle cx="15" cy="15" r="12.500" fill="url(#sun)" />
        <path d="M3.500 11.500a3.500 3.500 0 0 1 0-7 5 5 0 0 1 9.500-.5 4 4 0 0 1 1 7.500z" fill="#a9c1f2" stroke="#7f9fe0" strokeWidth=".7" />
        <path d="M16 26.500a3.500 3.500 0 0 1 .5-6.500 5 5 0 0 1 9-.5 3.600 3.600 0 0 1 1.500 7z" fill="#b5cbf5" stroke="#7f9fe0" strokeWidth=".7" />
      </svg>
      <div className="ml-[8px] -mt-[2px] w-[84px] flex flex-col text-[14px]">
        <div className="h-[20px] flex items-center"><Fit c="w-[30px]">73°F</Fit></div>
        <div className="h-[20px] flex items-center text-[#4b5053]"><Fit c="w-[82px]">Partly sunny</Fit></div>
      </div>
      <svg className="ml-[293px] w-[29px] h-[29px] shrink-0" viewBox="0 0 29 29">
        <defs><linearGradient id="win" x1="0" y1="0" x2="1" y2="1"><stop offset="0" stopColor="#4cc2f5" /><stop offset="1" stopColor="#0067c6" /></linearGradient></defs>
        <path d="M0 0h14v14H0zM15 0h14v14H15zM0 15h14v14H0zM15 15h14v14H15z" fill="url(#win)" />
      </svg>
      <div className="ml-[19px] w-[273px] h-[39px] shrink-0 rounded-full bg-[#f2f8fb] border border-[#c9d9df] flex items-center">
        <Svg c="ml-[13px] w-[19px] h-[19px]" vb="0 0 19 19" sw={2.200}><circle cx="8" cy="8" r="6.500" /><path d="M12.700 12.700l5 5" /></Svg>
        <Fit c="ml-[13px] mt-[1px] w-[52px] text-[16px] text-[#5b6165]">Search</Fit>
        <div className="ml-auto mr-[1px] w-[66px] h-[33px] rounded-full bg-[#e1e7ea] flex items-center justify-center">
          <svg className="w-[29px] h-[28px]" viewBox="0 0 29 28"><path d="M10 5.500V2h9v3.500" fill="none" stroke="#333" strokeWidth="2.200" /><rect x="0" y="5" width="29" height="22" rx="1.500" fill="#a86008" /><path d="M0 6.500A1.500 1.500 0 0 1 1.500 5h26A1.500 1.500 0 0 1 29 6.500V16H0z" fill="#e08f0a" /><rect x="12" y="14" width="5" height="5" fill="#fde02f" /></svg>
        </div>
      </div>
      <div className="ml-[5px] flex shrink-0">
        <AppIcon><path d="M1 9h22v22H1z" fill="#262626" /><path d="M9 1.500h22v20H9z" fill="#f7f7f7" opacity=".9" /><path d="M9 9h14v12.500H9z" fill="#c4c4c4" /></AppIcon>
        <AppIcon>
          <defs><linearGradient id="chat" x1="0" y1="0" x2="1" y2="1"><stop offset="0" stopColor="#9a66ac" /><stop offset=".5" stopColor="#7063c6" /><stop offset="1" stopColor="#4f55c8" /></linearGradient></defs>
          <path d="M16.500 1.500a14.500 14.500 0 1 1-5 28.500H1.500l2-6.500A14.500 14.500 0 0 1 16.500 1.500z" fill="url(#chat)" /><rect x="7.500" y="10" width="13" height="12.500" rx="2" fill="#fff" /><path d="M21.800 14.500l3.700-3v9.500l-3.700-3z" fill="#fff" /></AppIcon>
        <AppIcon>
          <defs>
            <linearGradient id="edg" x1="0" y1=".4" x2="1" y2=".6"><stop offset="0" stopColor="#2aa7da" /><stop offset=".55" stopColor="#36c8b4" /><stop offset="1" stopColor="#6be05c" /></linearGradient>
            <linearGradient id="edb" x1="0" y1="0" x2=".6" y2="1"><stop offset="0" stopColor="#1a9be0" /><stop offset="1" stopColor="#0c5fb3" /></linearGradient>
          </defs>
          <path d="M1 16C1 8 8 0 17 0c9 0 15 6 15 13 0 5-4 8-8.500 8-3.500 0-4.500-1.500-3.500-3 .8-1 .8-2 .8-3 0-3.500-4-6.500-9-6.500C6.500 8.500 2.500 11.500 1 16z" fill="url(#edg)" />
          <path d="M.5 17.500C1.500 11 6.500 8.300 11.500 8.300c5 0 9 2.500 9 6.200-.5-2-2.500-3-4.500-3-3.500 0-5.500 3.500-4.500 7.500 1.200 5 7 8 13 6 2.500-.8 4.500-2 5-1.500.7.600-4.500 8.500-13.500 8.500C7.500 32 0 25.500.5 17.500z" fill="url(#edb)" />
        </AppIcon>
        <AppIcon><path d="M0 4.500a2 2 0 0 1 2-2h9l3 3.500H0z" fill="#d99a0b" /><path d="M0 6h31v22a2 2 0 0 1-2 2H2a2 2 0 0 1-2-2z" fill="#fccb43" /><path d="M5 30v-5a3 3 0 0 1 3-3h15a3 3 0 0 1 3 3v5z" fill="#1b7fd3" /><path d="M9 26h13" stroke="#0b4f91" strokeWidth="1.500" /></AppIcon>
        <AppIcon><path d="M0 11.500L16 1l16 10.500V20H0z" fill="#0d4a94" /><path d="M3 10.500h26v4L16 23 3 14.500z" fill="#f4f6f8" /><path d="M0 11.500l16 10.500 16-10.500V30H0z" fill="#3fc0f2" /><path d="M0 11.500L28 30H0z" fill="#2499e2" /></AppIcon>
        <AppIcon><path d="M8.500 7V2.500h14V7" fill="none" stroke="#2bb4ef" strokeWidth="2" /><path d="M1 6h30v21a4 4 0 0 1-4 4H5a4 4 0 0 1-4-4z" fill="#1a4378" /><path d="M10.500 12.500h5v5h-5z" fill="#f25022" /><path d="M16.700 12.500h5v5h-5z" fill="#7fba00" /><path d="M10.500 18.700h5v5h-5z" fill="#00a4ef" /><path d="M16.700 18.700h5v5h-5z" fill="#ffb900" /></AppIcon>
        <AppIcon><rect x="2" y="1.500" width="29" height="29" rx="3" fill="#1f5c7c" stroke="#7b98a8" /><path d="M5.500 6c4-2 8 0 11 4 2 3 3 6 4.500 8.500 1 1.500 3 2 4 3.500M5.500 6c.5 3 2 5 2 8 0 3-.5 5 1 7.500l1.500-4c3 .5 5 3 7 5.500M23 22l4 2-1.500-4" fill="none" stroke="#d7e6ee" strokeWidth="1.200" /><path d="M23 3.500l2.500 3h3M25.500 6.500l2 3" fill="none" stroke="#fff" strokeWidth="1.800" /></AppIcon>
        <AppIcon dot><circle cx="16" cy="16" r="14" fill="#fb7c2c" /><path d="M7 5a14 14 0 0 1 22.500 15L25 9z" fill="#8f4ff0" /><path d="M29.500 20A14 14 0 0 1 8 27.500L22 20l5-8z" fill="#fcc244" /><path d="M8.500 9.500L16 7.500l8.500 2c0 8-2.500 13-8.500 15.500-5.500-2.500-7.500-7.500-7.500-15.500z" fill="#fff" /><circle cx="16.300" cy="14.500" r="2.300" fill="#343a55" /><path d="M15.300 15h2v5h-2z" fill="#343a55" /></AppIcon>
        <AppIcon dot><circle cx="16" cy="16" r="15.500" fill="#fbc116" /><path d="M2.800 8a15.500 15.500 0 0 0 12.200 23.400l7-12-9.500 3z" fill="#2da94f" /><path d="M2.800 8L9.500 19.500 16 9h13.500A15.500 15.500 0 0 0 2.800 8z" fill="#e33b2e" /><circle cx="16" cy="16" r="7.600" fill="#fff" /><circle cx="16" cy="16" r="6" fill="#3b7ded" /><circle cx="28" cy="4.500" r="10.300" fill="#3a3638" /><path d="M24-3c4 2 5 5 4 9M30 8h6" stroke="#77706f" fill="none" strokeWidth="1.500" /></AppIcon>
        <AppIcon dot><rect x="2" y="4.500" width="28" height="23" rx="1" fill="#0c0c0c" stroke="#8b8b8b" /><path d="M2.500 5h27v3h-27z" fill="#8d8d8d" /><path d="M5 11h6M12.500 12.500h6" stroke="#ddd" strokeWidth="1.200" strokeDasharray="2 .8" /></AppIcon>
        <AppIcon dot><circle cx="16" cy="16" r="15.500" fill="#ff6c37" /><path d="M7 26c1-4 4-6 6.500-9.500L20 10l3 2.500-6 6C14 21.500 11 24 7 26z" fill="#fff" /><circle cx="22.500" cy="8.500" r="3.300" fill="#fff" /></AppIcon>
        <AppIcon dot><path d="M23 0l8.500 4v24L23 32z" fill="#2aaaf3" /><path d="M23 0v9L4.500 24 .5 21z" fill="#1274b8" /><path d="M23 32v-9L4.500 8 .5 11z" fill="#2087cf" /></AppIcon>
      </div>
      <div className="relative shrink-0 w-[49px] h-[49px] ml-[3px] rounded-[5px] bg-[#edf6fa] border border-[#dfe9ee] flex flex-col items-center pt-[8px]">
        <svg className="w-[34px] h-[34px] overflow-visible" viewBox="0 0 34 34">
          <circle cx="16.500" cy="7" r="5" fill="#7b83eb" /><circle cx="26" cy="9" r="3.500" fill="#5059c9" /><path d="M9 13h16v11a7.500 7.500 0 0 1-15 2z" fill="#7b83eb" /><path d="M23 13h8v8a5 5 0 0 1-8 3z" fill="#5059c9" /><rect x="1" y="8" width="15" height="16" rx="1" fill="#444aae" /><path d="M5 12h7.500M8.700 12v8.500" stroke="#fff" strokeWidth="2" />
          <circle cx="29" cy="7" r="6.500" fill="#6bb700" stroke="#d9dfe0" strokeWidth="1.200" /><path d="M26 7l2.300 2.500L32 5" stroke="#fff" fill="none" strokeWidth="1.800" />
        </svg>
        <i className="absolute bottom-0 w-[20px] h-[4px] rounded-full bg-[#1f8594]" />
      </div>
      <Chevron d="up" c="ml-[115px] size-[17px]" />
      <svg className="ml-[31px] w-[21px] h-[15px] shrink-0 -mt-[2px] -translate-x-[10px]" viewBox="0 0 21 15"><path d="M5 14a4.300 4.300 0 0 1-.5-8.500 6 6 0 0 1 11.300 0A4.300 4.300 0 0 1 16.500 14z" fill="#c4c4c4" stroke="#222" strokeWidth="1.300" /><path d="M4.500 5.500a6 6 0 0 1 11 0l-4.500 3z" fill="#8f8f8f" /></svg>
      <Fit c="ml-[13px] w-[29px] text-[14.500px]">ENG</Fit>
      <Svg c="ml-[22px] w-[21px] h-[16px] -mt-[2px]" vb="0 0 21 16" sw={1.600}><path d="M1 6a13.500 13.500 0 0 1 19 0M4 9.200a9 9 0 0 1 13 0M7 12a5 5 0 0 1 7 0" /><circle cx="10.500" cy="14" r="1.500" fill="currentColor" stroke="none" /></Svg>
      <Svg c="ml-[9px] w-[20px] h-[16px] -mt-[2px]" vb="0 0 20 16"><path d="M1 5.500h3L8.500 1.500v13L4 10.500H1zM11 5c1.500 1.500 1.500 4.500 0 6" /><path d="M13.500 3c2.500 2.500 2.500 7.500 0 10M16 1c3.500 4 3.500 10 0 14" stroke="#9aa6ab" /></Svg>
      <Svg c="ml-[10px] w-[21px] h-[14px] -mt-[2px]" vb="0 0 21 14" sw={1.500}><rect x="1" y="1" width="16.500" height="12" rx="3" /><rect x="3.500" y="3.500" width="11.500" height="7" rx="1" fill="currentColor" stroke="none" /><path d="M19.500 4.500v5" strokeWidth="2" /></Svg>
      <div className="ml-auto mr-[20px] -mt-[2px] flex flex-col items-end text-[14px]">
        <div className="h-[20px] flex items-center"><Fit c="w-[54px]">4:10 PM</Fit></div>
        <div className="h-[20px] flex items-center"><Fit c="w-[69px]">10/3/2023</Fit></div>
      </div>
    </div>
  );
}

/* ---------- Browser behind the Teams window ---------- */
function BrowserBehind() {
  return (
    <div className="w-[1920px] h-[1080px] flex justify-between bg-[#f7f7f8]">
      <div className="w-[60px] flex flex-col">
        <div className="h-[136px] bg-[#ed1c24] border-b border-[#8d5a6b] text-[#f3dcdc] flex flex-col items-start relative">
          <div className="absolute left-0 top-0 w-[10px] h-[43px] bg-[#dcdae0] rounded-br-[8px]" />
          <Svg c="ml-[36px] mt-[16px] w-[11px] h-[11px]" vb="0 0 11 11" sw={1.600}><path d="M1 1l9 9M10 1L1 10" /></Svg>
          <Svg c="ml-[19px] mt-[34px] w-[17px] h-[16px]" vb="0 0 17 16" sw={1.500}><path d="M17 8H1.500M8 1L1.300 8 8 15" /></Svg>
          <div className="ml-[19px] mt-[27px] flex items-center">
            <svg className="size-[18px]" viewBox="0 0 18 18"><circle cx="9" cy="9" r="9" fill="#fff" /><path d="M2 7.500c3-1 5 0 5.500 1.500s3 .5 3 2.500-1.500 2-2.500 4C4 15 2 12 2 7.500zM9 2c-1.500 1.500-.5 3 1.500 3.500S13 8 16 8.500c0-4-3-6.500-7-6.500z" fill="#ed1c24" /></svg>
            <span className="ml-[10px] text-[15px] leading-none">a</span>
          </div>
        </div>
        <div className="mt-[10px] ml-[10px] h-[55px] rounded-l-[8px] bg-white flex items-center pl-[16px]">
          <Svg c="w-[18px] h-[18px] text-black" vb="0 0 18 18" sw={1.800}><rect x="1" y="1" width="16" height="16" rx="2" /><path d="M6.500 1v16" /></Svg>
        </div>
        <div className="mt-[703px] flex-1 border-t border-[#ececec] bg-white" />
      </div>
      <div className="w-[90px] flex flex-col">
        <div className="h-[43px] bg-[#dcdae0] flex items-start justify-end pr-[22px] pt-[12px]">
          <Svg c="w-[13px] h-[13px] text-[#8e8c92]" vb="0 0 13 13" sw={1.200}><path d="M.5.5l12 12M12.500.5l-12 12" /></Svg>
        </div>
        <div className="h-[93px] bg-[#ed1c24] border-b border-[#8d5a6b] text-[#f6dada]">
          <div className="mt-[8px] mr-[10px] h-[35px] rounded-r-full border border-[#f3dcdc] bg-[#44687e] flex items-center justify-end text-white">
            <Fit c="w-[46px] text-[14.500px] mt-[1px]">Update</Fit>
            <div className="ml-[18px] mr-[15px] flex flex-col gap-[4px]"><i className="size-[4px] rounded-full bg-white" /><i className="size-[4px] rounded-full bg-white" /><i className="size-[4px] rounded-full bg-white" /></div>
          </div>
          <div className="mt-[17px] flex justify-end pr-[18px]"><Fit c="w-[73px] text-[14.500px]">Bookmarks</Fit></div>
        </div>
        <div className="flex-1 flex">
          <div className="w-[80px] flex flex-col items-end">
            <div className="h-[768px] w-full flex flex-col items-end border-b border-[#ececec]">
              <div className="mt-[702px] mr-[20px] size-[32px] shrink-0 rounded-full border border-[#d4d4dc] bg-[#f4f4f7] flex items-center justify-center text-[#565869]">
                <Svg c="size-[14px]" vb="0 0 14 14" sw={1.500}><path d="M7 0v13M1 7.500l6 6 6-6" /></Svg>
              </div>
            </div>
            <div className="flex-1 w-full bg-white flex flex-col items-end">
              <div className="mt-[59px] mr-[10px] size-[32px] shrink-0 rounded-full border border-[#d4d4dc] bg-[#f4f4f7] flex items-center justify-center text-[#50525f] text-[18px] font-semibold leading-none">?</div>
            </div>
          </div>
          <div className="w-[10px] bg-white pt-[860px]"><div className="w-[10px] h-[21px] rounded-[5px] bg-[#dcdce6]" /></div>
        </div>
      </div>
    </div>
  );
}

export default function App() {
  return (
    <div className="relative w-[1920px] h-[1080px] overflow-hidden font-['Open_Sans',sans-serif]">
      <BrowserBehind />
      <div className="absolute left-[51px] top-[1px] w-[1788px] h-[1019px] rounded-t-[9px] overflow-hidden flex flex-col shadow-[0_0_0_1px_#9b9b9b,0_6px_40px_rgba(0,0,0,0.4)]">
        <TitleBar />
        <div className="flex flex-1 min-h-0">
          <Rail />
          <div className="w-[1704px] shrink-0 flex flex-col bg-[#f3f2f1]">
            <NameRow />
            <TabRow />
            <Ribbon />
            <FormulaBar />
            <Sheet />
            <SheetTabs />
            <StatusBar />
          </div>
        </div>
      </div>
      <Taskbar />
    </div>
  );
}
